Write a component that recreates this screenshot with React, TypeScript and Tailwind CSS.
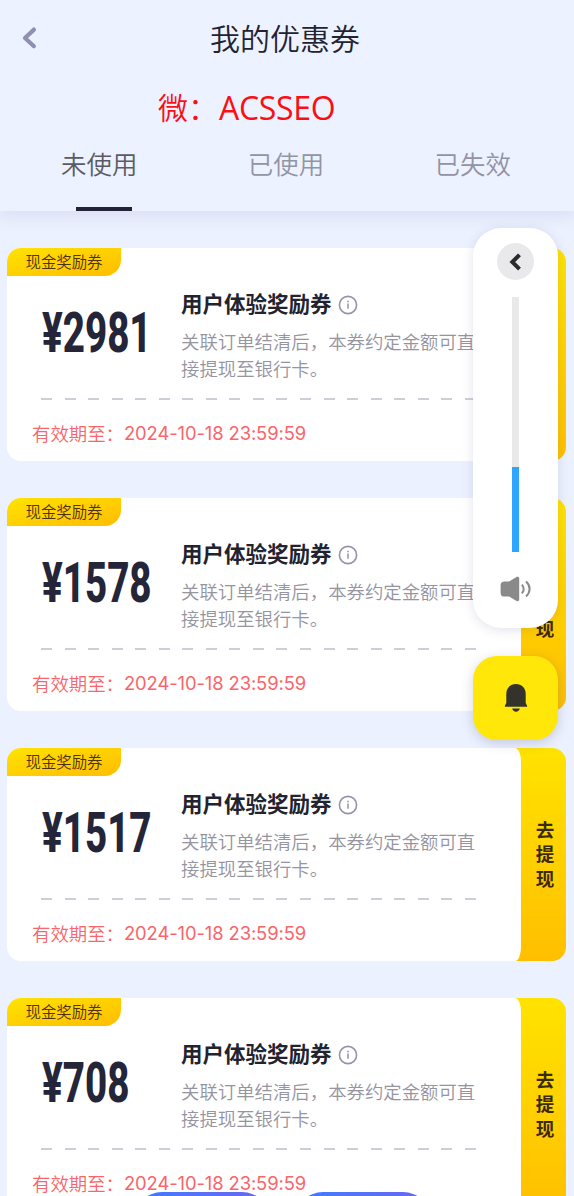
import { clsx } from "clsx";

type Coupon = {
  id: number;
  amount: number;
  expires: string;
};

const coupons: Coupon[] = [
  { id: 1, amount: 2981, expires: "2024-10-18 23:59:59" },
  { id: 2, amount: 1578, expires: "2024-10-18 23:59:59" },
  { id: 3, amount: 1517, expires: "2024-10-18 23:59:59" },
  { id: 4, amount: 708, expires: "2024-10-18 23:59:59" },
];

const tabs = ["未使用", "已使用", "已失效"];

function Header() {
  return (
    <header className="relative z-10 h-[211px] bg-[#ecf2ff] shadow-[0_4px_14px_2px_#dddff5]">
      <div className="flex h-[76px] items-center px-[22px]">
        <svg width="16" height="24" viewBox="0 0 16 24" fill="none" className="shrink-0">
          <path
            d="M11.900 3.600 3 12l8.900 8.200"
            stroke="#908fb2"
            strokeWidth="4.200"
            strokeLinecap="round"
            strokeLinejoin="round"
          />
        </svg>
        <h1 className="flex-1 pb-[2px] pr-[20px] text-center text-[30px] font-[350] leading-[40px] text-[#23232f]">
          我的优惠券
        </h1>
      </div>
      <p className="flex h-16 items-center pl-[158px] text-[30px] font-[350] text-[#fb0f14]">
        <span className="pb-[4px]">微：</span>
        <span className="pl-px font-['Open_Sans','Noto_Sans',sans-serif] text-[32px] font-normal tracking-[-0.3px]">
          ACSSEO
        </span>
      </p>
      <nav className="flex h-[71px] pl-[6px] pr-[8px]">
        {tabs.map((tab, index) => (
          <div key={tab} className="flex flex-1 flex-col items-center justify-between">
            <span
              className={clsx(
                "pt-[5px] text-[25.5px] font-[350] leading-[36px]",
                index === 0 ? "text-[#5b5b64]" : "text-[#9394a3]",
              )}
            >
              {tab}
            </span>
            {index === 0 && <span className="ml-[9px] h-1 w-14 bg-[#22223a]" />}
          </div>
        ))}
      </nav>
    </header>
  );
}

function InfoIcon() {
  return (
    <svg width="20" height="20" viewBox="0 0 20 20" fill="none" stroke="#9493ac" className="mt-[3px]">
      <circle cx="10" cy="10" r="8.600" strokeWidth="1.600" />
      <path d="M10 8.600v5.200" strokeWidth="1.500" />
      <path d="M10 5.800v1.500" strokeWidth="1.600" />
    </svg>
  );
}

function CouponCard({ coupon }: { coupon: Coupon }) {
  return (
    <div className="flex h-[213px]">
      <div className="relative z-[1] w-[514px] shrink-0 [border-radius:14px_6px_6px_14px/14px] bg-white">
        <div className="flex h-[28px] w-[114px] items-center justify-center rounded-tl-[14px] rounded-br-[16px] bg-linear-to-br from-[#ffe300] to-[#ffbd00] pb-px text-[15.4px] font-[350] text-[#4a3310]">
          现金奖励券
        </div>
        <div className="flex h-[122px] pl-[34px]">
          <div className="w-[140px] shrink-0 pl-px pt-[25px]">
            <div className="w-max origin-left scale-x-[0.7] font-[Roboto,sans-serif] text-[55px] font-extrabold leading-[64px] text-[#25253a]">
              ¥{coupon.amount}
            </div>
          </div>
          <div className="w-[300px] pt-[13px]">
            <div className="flex items-center gap-[6px]">
              <h2 className="text-[21.5px] font-bold leading-[28px] text-[#23232f]">
                用户体验奖励券
              </h2>
              <InfoIcon />
            </div>
            <p className="pt-[11px] text-[18.4px] font-[350] leading-[27px] text-[#95949f]">
              关联订单结清后，本券约定金额可直接提现至银行卡。
            </p>
          </div>
        </div>
        <div className="ml-[34px] h-[1.5px] w-[435px] bg-[repeating-linear-gradient(90deg,#ceced9_0_11px,transparent_11px_23.55px)]" />
        <p className="flex pl-[25px] pt-[19px] text-[18.4px] leading-[28px] text-[#f9656a]">
          <span className="font-[350]">有效期至：</span>
          <span className="font-[Inter,sans-serif] tracking-[-0.1px]">{coupon.expires}</span>
        </p>
      </div>
      <button className="-ml-[6px] flex flex-1 flex-col items-center justify-center rounded-r-[14px] bg-linear-to-b from-[#ffe300] to-[#ffbf00] pb-[2px] pl-[9px] text-[18.5px] font-bold leading-[24.5px] text-[#3a2a05]">
        <span>去</span>
        <span>提</span>
        <span>现</span>
      </button>
    </div>
  );
}

function FloatingControls() {
  return (
    <div className="absolute left-[473px] top-[228px] z-20 flex w-[85px] flex-col gap-[28px]">
      <div className="flex h-[400px] flex-col items-center rounded-[28px] bg-white pt-[15px] shadow-[0_2px_12px_rgba(80,80,130,0.16)]">
        <button className="flex size-[37px] items-center justify-center rounded-full bg-[#e9e9ec] pr-[2px]">
          <svg width="14" height="18" viewBox="0 0 14 18" fill="none">
            <path d="M11.500 1.800 4.300 9l7.200 7.200" stroke="#2b2b2f" strokeWidth="4" />
          </svg>
        </button>
        <div className="mt-[17px] flex h-[255px] w-[7px] flex-col justify-end bg-[#e9e9e9]">
          <div className="h-[85px] bg-[#2ea5ff]" />
        </div>
        <svg width="32" height="26" viewBox="0 0 32 26" fill="none" className="mt-[24px]">
          <path
            d="M4.500 5.500h4.600l7-4.200c1.400-.9 3.100-.4 3.100 1v21.400c0 1.400-1.700 1.900-3.100 1l-7-4.200H4.500C2 20.500.6 19.300.6 16.900V9.100C.6 6.700 2 5.500 4.500 5.500Z"
            fill="#8a8a8a"
          />
          <path
            d="M21.800 8.600c2.500 2.400 2.500 6.400 0 8.800M26 5.600c4.800 4.200 4.800 10.600 0 14.800"
            stroke="#8a8a8a"
            strokeWidth="2"
          />
        </svg>
      </div>
      <button className="flex h-[84px] items-center justify-center rounded-[24px] bg-[#ffe70a] shadow-[0_3px_12px_rgba(80,80,130,0.25)]">
        <svg width="24" height="30" viewBox="0 0 24 30" fill="#33332b">
          <path d="M12 1C6.500 1 2.300 5 2.300 10.500V20L.9 22.700v1h22.200v-1L21.700 20v-9.500C21.700 5 17.500 1 12 1Z" />
          <path d="M8.200 25.600h7.600c-.3 1.900-1.900 3.200-3.800 3.200s-3.500-1.300-3.800-3.200Z" />
        </svg>
      </button>
    </div>
  );
}

function BottomActions() {
  return (
    <div className="absolute inset-x-0 top-[1192px] z-20 flex justify-center gap-[25px] pr-[9px]">
      <div className="h-14 w-[136px] rounded-full bg-linear-to-r from-[#3d7bff] to-[#6867ee]" />
      <div className="h-14 w-[136px] rounded-full bg-linear-to-r from-[#3d7bff] to-[#6867ee]" />
    </div>
  );
}

export default function App() {
  return (
    <div className="relative h-[1196px] w-[574px] overflow-hidden bg-[#ebf1fe] font-['Noto_Sans_CJK_SC',sans-serif]">
      <Header />
      <main className="flex flex-col gap-[37px] pl-[7px] pr-[8px] pt-[37px]">
        {coupons.map((coupon) => (
          <CouponCard key={coupon.id} coupon={coupon} />
        ))}
      </main>
      <FloatingControls />
      <BottomActions />
    </div>
  );
}
